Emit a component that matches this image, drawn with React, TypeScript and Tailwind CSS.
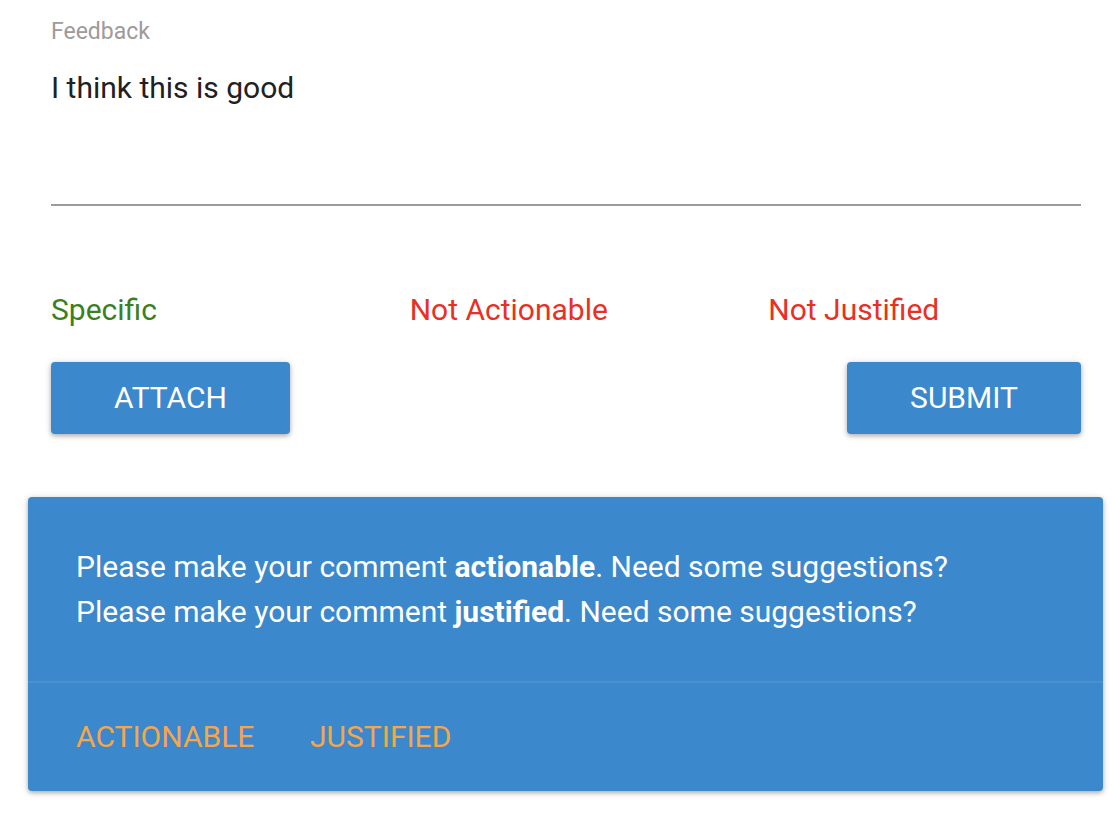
export default function App() {
  return (
    <div className="w-[1118px] h-[840px] bg-white font-['Roboto',sans-serif] overflow-hidden">
      <div className="pl-[51px] pr-[37px] pt-[20px]">
        <div className="text-[23px] leading-[23px] text-[#9e9a9a]">Feedback</div>
        <div className="mt-[30px] h-[131px] text-[30px] leading-[30px] text-[#212121]">I think this is good</div>
        <div className="h-[2px] bg-[#9b9b9b]" />
        <div className="mt-[89px] grid grid-cols-3 gap-x-[46px] text-[30px] leading-[30px]">
          <div className="text-[#3b7f1e]">Specific</div>
          <div className="text-[#ea2f25]">Not Actionable</div>
          <div className="text-[#ea2f25]">Not Justified</div>
        </div>
        <div className="mt-[37px] flex justify-between">
          <button className="w-[239px] h-[72px] rounded-[4px] bg-[#3b88cc] text-white text-[30px] leading-[30px] flex items-center justify-center shadow-[0_2px_4px_rgba(0,0,0,0.25),0_1px_8px_rgba(0,0,0,0.12)]">ATTACH</button>
          <button className="w-[234px] h-[72px] rounded-[4px] bg-[#3b88cc] text-white text-[30px] leading-[30px] flex items-center justify-center shadow-[0_2px_4px_rgba(0,0,0,0.25),0_1px_8px_rgba(0,0,0,0.12)]">SUBMIT</button>
        </div>
      </div>
      <div className="ml-[28px] mr-[15px] mt-[63px] rounded-[4px] bg-[#3b88cc] shadow-[0_2px_4px_rgba(0,0,0,0.25),0_1px_8px_rgba(0,0,0,0.12)]">
        <div className="px-[48px] pt-[47px] pb-[47px] border-b-2 border-[#4a91d0] text-white text-[30px] leading-[45px]">
          <div>Please make your comment <span className="font-bold">actionable</span>. Need some suggestions?</div>
          <div>Please make your comment <span className="font-bold">justified</span>. Need some suggestions?</div>
        </div>
        <div className="h-[108px] px-[48px] flex items-center text-[30px] leading-[30px] text-[#f4a64c]">
          <span className="w-[234px]">ACTIONABLE</span>
          <span>JUSTIFIED</span>
        </div>
      </div>
    </div>
  );
}
